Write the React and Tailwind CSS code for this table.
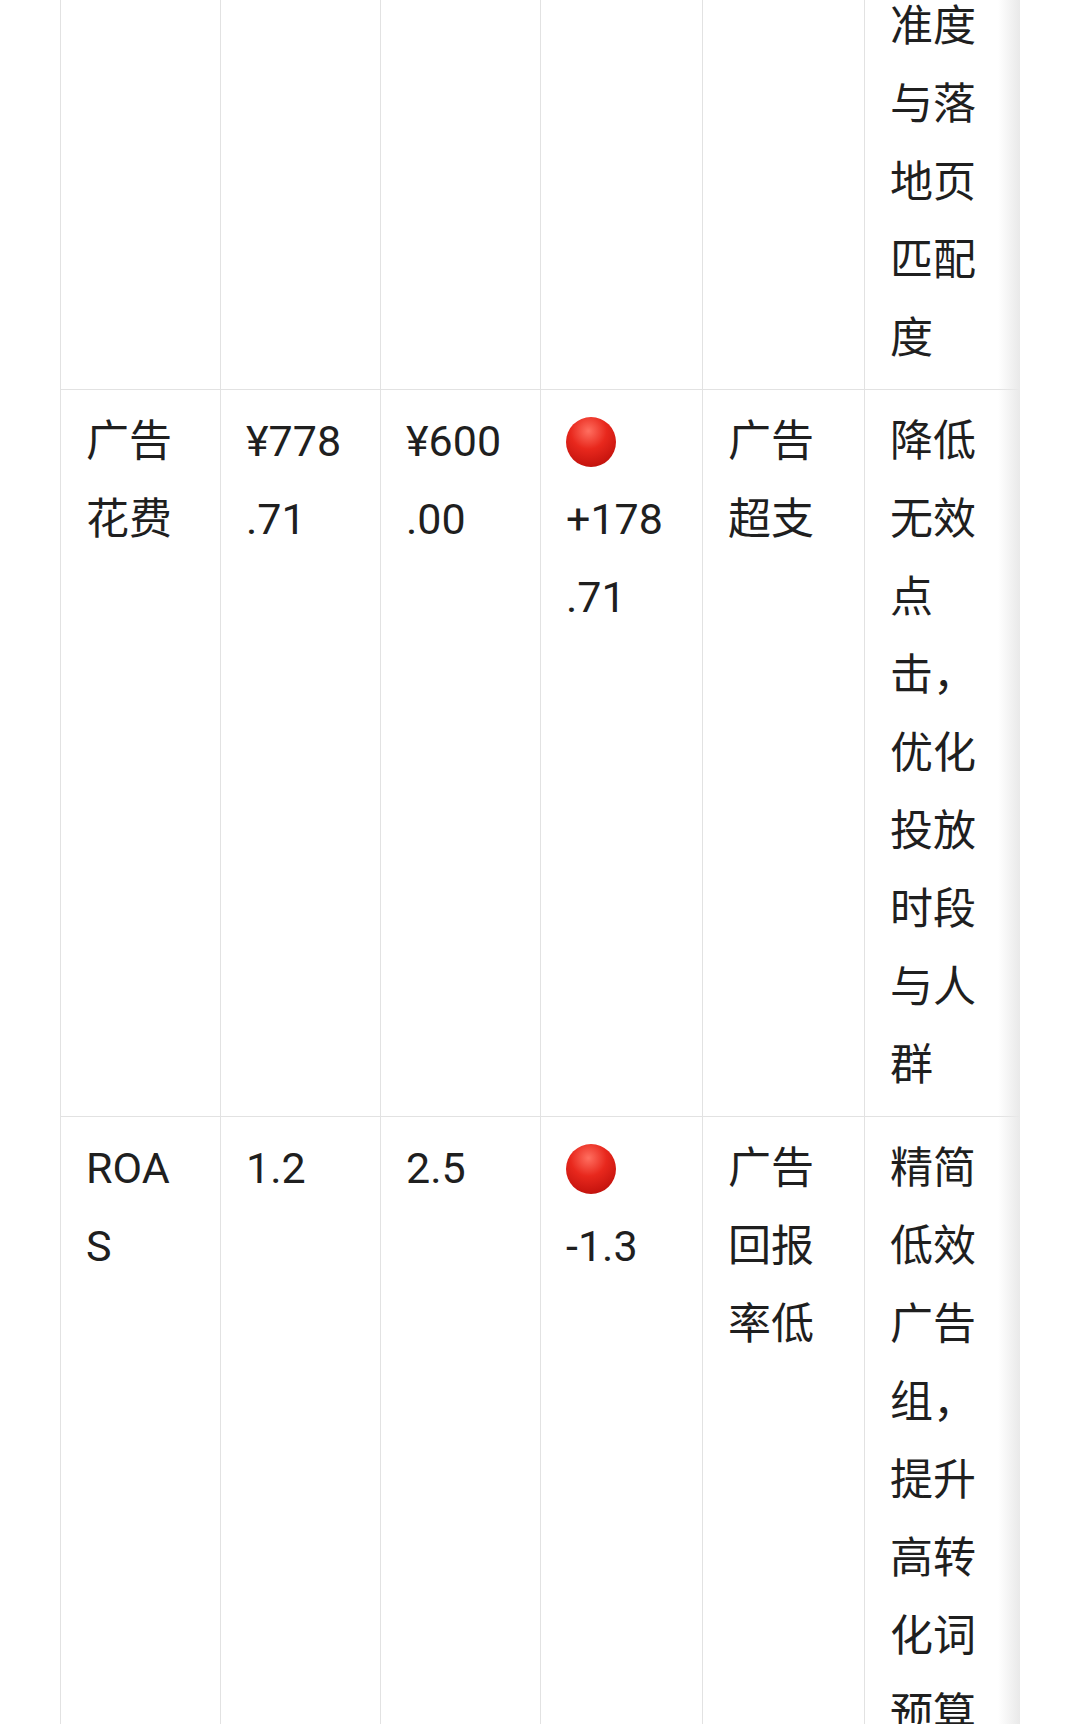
import React from "react";

const rows = [
  { name: "", actual: "", target: "", diff: null, issue: "", action: "准度与落地页匹配度" },
  { name: "广告花费", actual: "¥778.71", target: "¥600.00", diff: "+178.71", issue: "广告超支", action: "降低无效点击，优化投放时段与人群" },
  { name: "ROAS", actual: "1.2", target: "2.5", diff: "-1.3", issue: "广告回报率低", action: "精简低效广告组，提升高转化词预算" },
];

function RedDot() {
  return (
    <span className="inline-block w-[50px] h-[50px] rounded-full align-middle -mt-[6px] bg-[radial-gradient(circle_at_45%_28%,#ff6f60_0%,#e8281d_40%,#c8150f_75%,#9e0d08_100%)]"></span>
  );
}

export default function App() {
  const cell =
    "border border-[#e2e2e2] border-t-0 align-top pl-[25px] pr-[32px] py-3 [overflow-wrap:anywhere]";

  return (
    <div className="min-h-screen bg-white overflow-hidden font-['Roboto','Noto_Sans_CJK_SC',sans-serif] text-[43px] leading-[78px] text-[#1f1f1f]">
      {/* table is scrolled: the first row starts above the screen */}
      <div className="relative ml-[60px] w-[960px] overflow-hidden -mt-[25px]">
        <table className="table-fixed border-collapse w-[960px]">
          <colgroup>
            <col className="w-[160px]" />
            <col className="w-[160px]" />
            <col className="w-[160px]" />
            <col className="w-[162px]" />
            <col className="w-[162px]" />
            <col className="w-[156px]" />
          </colgroup>
          <tbody>
            {rows.map((r, i) => (
              <tr key={i}>
                <td className={cell}>{r.name}</td>
                <td className={cell}>{r.actual}</td>
                <td className={cell}>{r.target}</td>
                <td className={cell}>
                  {r.diff && (
                    <>
                      <RedDot /> {r.diff}
                    </>
                  )}
                </td>
                <td className={cell}>{r.issue}</td>
                <td className={`${cell} border-r-0`}>{r.action}</td>
              </tr>
            ))}
          </tbody>
        </table>
        {/* scroll shadow on the right edge */}
        <div className="pointer-events-none absolute top-0 right-0 h-full w-[22px] bg-gradient-to-r from-white/0 to-[#e9e9e9]"></div>
      </div>
    </div>
  );
}
